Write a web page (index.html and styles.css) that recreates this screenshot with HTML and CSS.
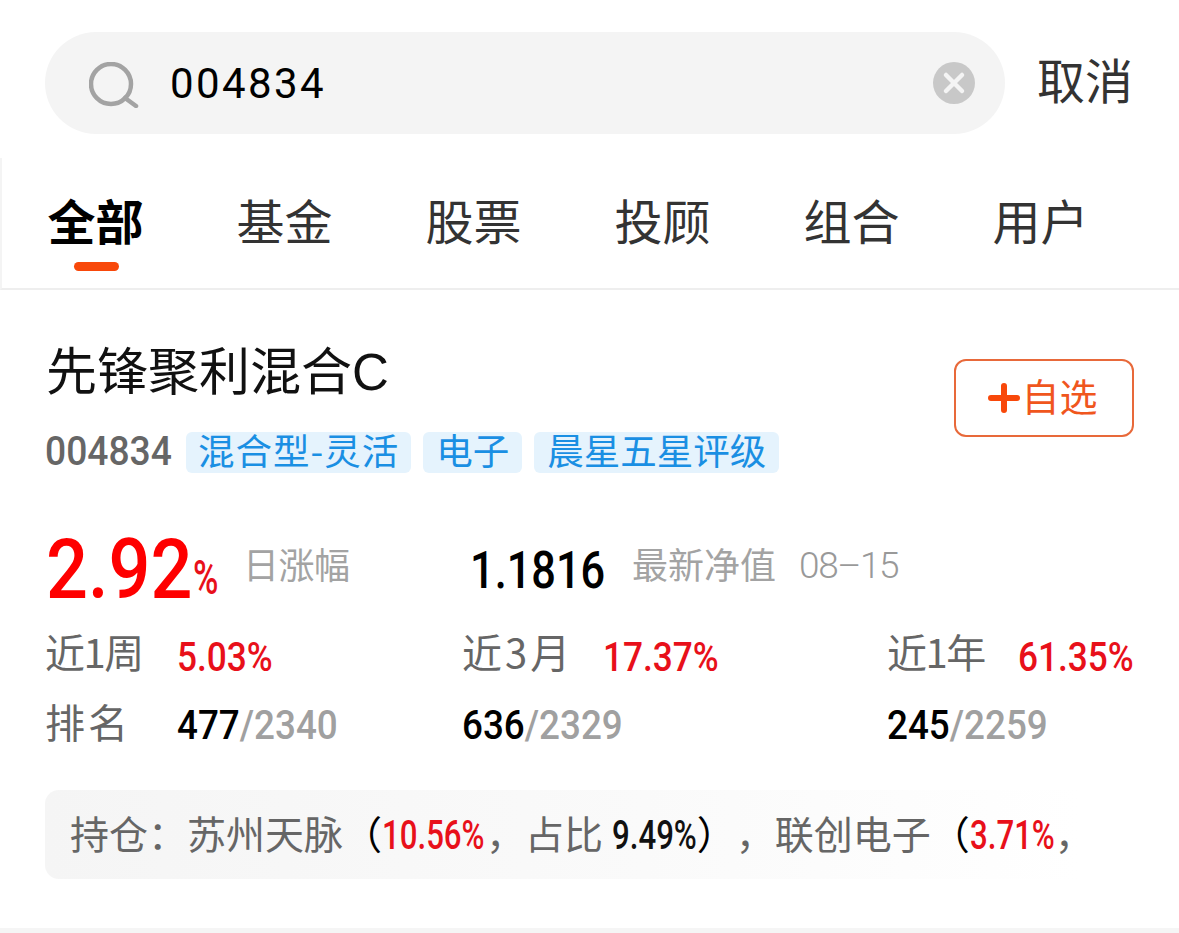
FILE: index.html
```html
<!DOCTYPE html>
<html lang="zh">
<head>
<meta charset="utf-8">
<title>搜索</title>
<link rel="stylesheet" href="styles.css">
</head>
<body>
<header class="search-row">
  <div class="search-box">
    <svg class="icon-search" viewBox="0 0 50 46" width="50" height="46"><circle cx="22" cy="22" r="20" fill="none" stroke="#a3a3a3" stroke-width="4.5"/><path d="M36 36l11 8" fill="none" stroke="#a3a3a3" stroke-width="4.5" stroke-linecap="round"/></svg>
    <span class="search-text">004834</span>
    <svg class="icon-clear" viewBox="0 0 42 42" width="42" height="42"><circle cx="21" cy="21" r="21" fill="#c8c8c8"/><path d="M13 13l16 16M29 13L13 29" stroke="#f4f4f4" stroke-width="4.5" stroke-linecap="round"/></svg>
  </div>
  <span class="cancel">取消</span>
</header>
<nav class="tabs">
  <a class="tab active">全部</a>
  <a class="tab">基金</a>
  <a class="tab">股票</a>
  <a class="tab">投顾</a>
  <a class="tab">组合</a>
  <a class="tab">用户</a>
</nav>
<main class="card">
  <div class="card-head">
    <div class="card-info">
      <h1 class="name">先锋聚利混合C</h1>
      <div class="meta">
        <span class="code cond">004834</span>
        <span class="tag tag-wide">混合型-灵活</span>
        <span class="tag">电子</span>
        <span class="tag">晨星五星评级</span>
      </div>
    </div>
    <button class="add"><svg class="icon-plus" viewBox="0 0 32 30" width="32" height="30"><path d="M3 15h26M16 3v24" stroke="#f8480a" stroke-width="6" stroke-linecap="round"/></svg><span class="add-text">自选</span></button>
  </div>
  <div class="headline">
    <div class="hl-left"><span class="big cond">2.92</span><span class="big-pct cond">%</span><span class="hl-label">日涨幅</span></div>
    <div class="hl-right"><span class="nav-value cond">1.1816</span><span class="hl-label">最新净值</span><span class="hl-date">08–15</span></div>
  </div>
  <div class="stats">
    <div class="cell"><span class="label l1">近1周</span><span class="up cond">5.03%</span></div>
    <div class="cell"><span class="label l2">近3月</span><span class="up cond">17.37%</span></div>
    <div class="cell"><span class="label l3">近1年</span><span class="up cond">61.35%</span></div>
    <div class="cell"><span class="label l1 plain">排名</span><span class="rank cond"><b>477</b>/2340</span></div>
    <div class="cell"><span class="rank cond"><b>636</b>/2329</span></div>
    <div class="cell"><span class="rank cond"><b>245</b>/2259</span></div>
  </div>
  <p class="holdings">持仓：苏州天脉<span class="paren">（</span><span class="num red cond w-long">10.56%</span>，占比 <span class="num dark cond w-mid">9.49%</span><span class="paren">）</span>，联创电子<span class="paren">（</span><span class="num red cond w-mid">3.71%</span>，</p>
</main>
<div class="band"></div>
</body>
</html>
```

FILE: styles.css
```css
* { box-sizing: border-box; }
html, body { margin: 0; height: 933px; overflow: hidden; background: #fff; }
body { font-family: "Noto Sans CJK SC", "Liberation Sans", sans-serif; color: #333; position: relative; text-spacing-trim: space-all; }

.cond { display: inline-block; transform-origin: left center; white-space: nowrap; }

.search-row { display: flex; align-items: center; padding: 32px 0 0 45px; height: 134px; }
.search-box { width: 960px; height: 102px; border-radius: 51px; background: #f4f4f4; display: flex; align-items: center; padding: 0 30px 0 44px; }
.icon-search { flex: none; margin-top: 4px; }
.search-text { flex: 1; margin: 2px 0 0 31px; font: 42px/1 "Roboto", sans-serif; color: #000; letter-spacing: 2.4px; }
.cancel { margin: 0 0 10px 32px; font-size: 48px; line-height: 1; color: #333; }

.tabs { display: grid; grid-template-columns: repeat(6, 189px); margin-top: 24px; height: 132px; border-bottom: 2px solid #eeeeee; border-left: 2px solid #f4f4f4; padding-top: 31px; }
.tab { position: relative; text-align: center; font-size: 48px; line-height: 60px; color: #333; margin-left: -2px; }
.tab.active { color: #000; font-weight: 700; }
.tab.active::after { content: ""; position: absolute; left: 74px; top: 73px; width: 45px; height: 9px; border-radius: 5px; background: #f8480a; }

.card { padding: 0 45px; }
.card-head { display: flex; justify-content: space-between; }
.name { margin: 53px 0 0 1px; font-family: "Liberation Sans", "Noto Sans CJK SC", sans-serif; font-size: 51px; font-weight: 400; line-height: 60px; color: #111; }
.meta { display: flex; align-items: center; gap: 12px; margin-top: 28px; }
.code { font: 500 40px/42px "Roboto", sans-serif; color: #666; width: 129px; transform: scaleX(.93); }
.tag { height: 41px; padding: 0 13px; border-radius: 6px; background: #e5f3fd; color: #1a8fe3; font-size: 36.5px; line-height: 36px; white-space: nowrap; }
.tag-wide { padding: 0 12px; letter-spacing: 1px; }
.add { margin-top: 69px; width: 180px; height: 78px; border: 2px solid #e8693a; border-radius: 12px; background: #fff; color: #f0561d; font: 38px/1 "Noto Sans CJK SC", sans-serif; display: flex; align-items: center; justify-content: center; padding: 0 2px 0 0; }
.icon-plus { margin-right: 1px; }
.add-text { margin-bottom: 6px; }

.headline { display: flex; align-items: flex-start; margin-top: 56px; height: 99px; }
.hl-left { width: 425px; display: flex; align-items: flex-start; padding-left: 1px; }
.big { font: 500 83px/84px "Roboto", sans-serif; color: #fe0000; width: 147px; margin-top: -1px; transform: scaleX(.89); }
.big-pct { font: 500 48px/48px "Roboto", sans-serif; color: #e8101a; width: 24px; margin-top: 25px; transform: scaleX(.72); }
.hl-label { font-size: 36px; line-height: 40px; color: #a3a3a3; margin: 14px 0 0 28px; }
.hl-left .hl-label { margin-left: 26px; letter-spacing: -.5px; }
.hl-right { display: flex; align-items: flex-start; }
.nav-value { font: 500 51px/52px "Roboto", sans-serif; color: #000; width: 134px; margin-top: 16px; transform: scaleX(.85); }
.hl-date { font: 300 37px/40px "Roboto", sans-serif; color: #999; margin: 17px 0 0 23px; letter-spacing: -1.4px; }

.stats { display: grid; grid-template-columns: 417px 425px 1fr; row-gap: 20px; }
.cell { display: flex; align-items: center; height: 50px; white-space: nowrap; }
.label { font-size: 40px; line-height: 50px; color: #666; margin-bottom: 4px; }
.l1 { width: 132px; letter-spacing: -1.5px; }
.l2 { width: 141px; letter-spacing: 3px; }
.l3 { width: 131px; letter-spacing: -1.5px; }
.plain { letter-spacing: 3px; }
.up { font: 500 40px/50px "Roboto", sans-serif; color: #e8101a; margin-top: 10px; transform: scaleX(.88); }
.rank { font: 500 40px/50px "Roboto", sans-serif; color: #a0a0a0; margin-top: 6px; transform: scaleX(.92); }
.rank b { color: #000; font-weight: 500; }

.holdings { margin: 42px 0 0; height: 89px; width: 1089px; border-radius: 14px; padding: 0 25px; background: linear-gradient(90deg, #f5f5f5, #fafafa 55%, #fff 95%); font-size: 39px; line-height: 84px; color: #666; white-space: nowrap; overflow: hidden; }
.paren { color: #000; }
.num { font: 500 40px/1 "Roboto", sans-serif; transform: scaleX(.78); }
.w-long { width: 104px; }
.w-mid { width: 85px; }
.red { color: #e8101a; }
.dark { color: #111; }

.band { position: absolute; left: 0; right: 0; top: 928px; height: 5px; background: #f5f5f5; }
```
